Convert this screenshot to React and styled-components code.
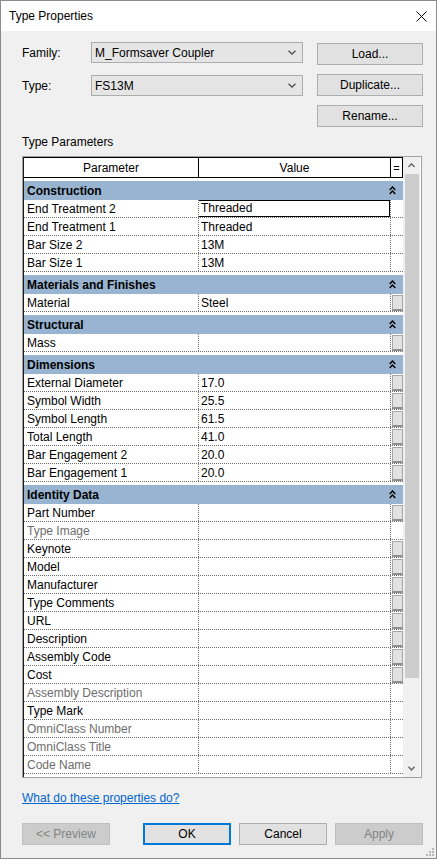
import React from "react"
import styled, { createGlobalStyle, css } from "styled-components"

const GlobalStyle = createGlobalStyle`
  html, body {
    margin: 0;
    padding: 0;
    background: #ffffff;
  }
  body {
    font-family: "Segoe UI", "Liberation Sans", Arial, sans-serif;
    font-size: 12px;
    color: #000;
  }
`

const groups = [
  {
    name: "Construction",
    rows: [
      { label: "End Treatment 2", value: "Threaded", focus: true },
      { label: "End Treatment 1", value: "Threaded" },
      { label: "Bar Size 2", value: "13M" },
      { label: "Bar Size 1", value: "13M" },
    ],
  },
  {
    name: "Materials and Finishes",
    rows: [{ label: "Material", value: "Steel", btn: true }],
  },
  {
    name: "Structural",
    rows: [{ label: "Mass", value: "", btn: true }],
  },
  {
    name: "Dimensions",
    rows: [
      { label: "External Diameter", value: "17.0", btn: true },
      { label: "Symbol Width", value: "25.5", btn: true },
      { label: "Symbol Length", value: "61.5", btn: true },
      { label: "Total Length", value: "41.0", btn: true },
      { label: "Bar Engagement 2", value: "20.0", btn: true },
      { label: "Bar Engagement 1", value: "20.0", btn: true },
    ],
  },
  {
    name: "Identity Data",
    rows: [
      { label: "Part Number", btn: true },
      { label: "Type Image", dim: true },
      { label: "Keynote", btn: true },
      { label: "Model", btn: true },
      { label: "Manufacturer", btn: true },
      { label: "Type Comments", btn: true },
      { label: "URL", btn: true },
      { label: "Description", btn: true },
      { label: "Assembly Code", btn: true },
      { label: "Cost", btn: true },
      { label: "Assembly Description", dim: true },
      { label: "Type Mark" },
      { label: "OmniClass Number", dim: true },
      { label: "OmniClass Title", dim: true },
      { label: "Code Name", dim: true },
    ],
  },
]

// window chrome
const Window = styled.div`
  width: 437px;
  height: 859px;
  box-sizing: border-box;
  border: 1px solid #8c8c8c;
  background: #f0f0f0;
  display: flex;
  flex-direction: column;
  position: relative;
`

const TitleBar = styled.div`
  height: 30px;
  background: #ffffff;
  display: flex;
  align-items: center;
  justify-content: space-between;
  padding-left: 8px;
`

const Title = styled.span`
  font-size: 12px;
`

const CloseButton = styled.div`
  width: 30px;
  height: 30px;
  display: flex;
  align-items: center;
  justify-content: center;
`

const Body = styled.div`
  flex: 1;
  padding: 11px 13px 0 21px;
  display: flex;
  flex-direction: column;
`

// top fields
const TopSection = styled.div`
  display: flex;
`

const Fields = styled.div`
  display: flex;
  flex-direction: column;
  gap: 12px;
`

const FieldRow = styled.div`
  display: flex;
  align-items: center;
`

const FieldLabel = styled.span`
  width: 69px;
`

const Select = styled.div`
  width: 212px;
  height: 21px;
  box-sizing: border-box;
  border: 1px solid #adadad;
  background: #e5e5e5;
  display: flex;
  align-items: center;
  justify-content: space-between;
  padding: 0 6px 0 3px;
`

const SideButtons = styled.div`
  margin-left: 14px;
  padding-top: 1px;
  display: flex;
  flex-direction: column;
  gap: 9px;
`

const Button = styled.div`
  width: ${(p) => p.$w || 106}px;
  height: 22px;
  box-sizing: border-box;
  border: 1px solid #adadad;
  background: #e1e1e1;
  display: flex;
  align-items: center;
  justify-content: center;
  ${(p) =>
    p.$default &&
    css`
      border: 2px solid #0078d7;
    `}
  ${(p) =>
    p.$disabled &&
    css`
      background: #cccccc;
      border-color: #bfbfbf;
      color: #838383;
    `}
`

const SectionLabel = styled.div`
  margin-top: 7px;
  line-height: 16px;
`

// property grid
const Grid = styled.div`
  margin-top: 6px;
  width: 400px;
  height: 622px;
  box-sizing: border-box;
  border: 1px solid #a0a0a0;
  background: #ffffff;
  display: flex;
`

const Table = styled.div`
  width: 380px;
  box-sizing: border-box;
  border-left: 1px solid #1e1e1e;
  overflow: hidden;
`

const cols = css`
  display: grid;
  grid-template-columns: 175px 192px 12px;
`

const HeaderRow = styled.div`
  ${cols};
  height: 21px;
  box-sizing: border-box;
  border-top: 1px solid #000;
  border-bottom: 1px solid #000;
`

const HeaderCell = styled.div`
  border-right: 1px solid #000;
  display: flex;
  align-items: center;
  justify-content: center;
  font-size: ${(p) => (p.$small ? 11 : 12)}px;
`

const GroupHeader = styled.div`
  margin-top: 3px;
  height: 19px;
  background: #99b4d1;
  display: flex;
  align-items: center;
  justify-content: space-between;
  padding-left: 3px;
  padding-right: 7px;
  font-weight: bold;
`

const Row = styled.div`
  ${cols};
  height: 18px;
  box-sizing: border-box;
  border-bottom: 1px dotted #6e6e6e;
`

const Cell = styled.div`
  display: flex;
  align-items: center;
  padding-left: ${(p) => p.$pad ?? 3}px;
  border-right: ${(p) => (p.$last ? "none" : "1px dotted #6e6e6e")};
  color: ${(p) => (p.$dim ? "#6d6d6d" : "#000")};
  white-space: nowrap;
  overflow: hidden;
`

const Editor = styled.div`
  flex: 1;
  height: 17px;
  box-sizing: border-box;
  border: 1px solid #000;
  margin-left: -1px;
  margin-top: -1px;
  padding-left: 2px;
  display: flex;
  align-items: center;
`

const ParamButton = styled.div`
  width: 9px;
  height: 13px;
  margin: 0 auto;
  background: #e1e1e1;
  border: 1px solid #a7a7a7;
  border-bottom: 2px solid #8e8e8e;
`

const Scrollbar = styled.div`
  width: 17px;
  background: #f0f0f0;
  display: flex;
  flex-direction: column;
`

const ScrollArrow = styled.div`
  height: 17px;
  display: flex;
  align-items: center;
  justify-content: center;
`

const Track = styled.div`
  flex: 1;
  padding: 0 1px 0 2px;
`

const Thumb = styled.div`
  height: 504px;
  background: #cdcdcd;
`

const Link = styled.a`
  margin-top: 12px;
  line-height: 16px;
  color: #0066cc;
  text-decoration: underline;
  align-self: flex-start;
`

const Footer = styled.div`
  margin-top: 17px;
  display: flex;
  gap: 8px;
`

const Spacer = styled.div`
  flex: 1;
`

const Grip = styled.div`
  position: absolute;
  right: 2px;
  bottom: 2px;
  display: flex;
`

const Chevron = ({ up, color = "#606060", w = 7, h = 4 }) => (
  <svg width={w} height={h + 1} viewBox={`0 0 ${w} ${h + 1}`}>
    <polyline
      points={up ? `0.5,${h} ${w / 2},0.8 ${w - 0.5},${h}` : `0.5,0.8 ${w / 2},${h} ${w - 0.5},0.8`}
      fill="none"
      stroke={color}
      strokeWidth="1.3"
    />
  </svg>
)

const Collapse = () => (
  <svg width="7" height="9" viewBox="0 0 7 9">
    <polyline points="0.7,4 3.5,1 6.3,4" fill="none" stroke="#000" strokeWidth="1.4" />
    <polyline points="0.7,8 3.5,5 6.3,8" fill="none" stroke="#000" strokeWidth="1.4" />
  </svg>
)

export default function App() {
  return (
    <>
      <GlobalStyle />
      <Window>
        <TitleBar>
          <Title>Type Properties</Title>
          <CloseButton>
            <svg width="11" height="11" viewBox="0 0 11 11">
              <path d="M0.5 0.5 L10.5 10.5 M10.5 0.5 L0.5 10.5" stroke="#000" strokeWidth="1" />
            </svg>
          </CloseButton>
        </TitleBar>
        <Body>
          <TopSection>
            <Fields>
              <FieldRow>
                <FieldLabel>Family:</FieldLabel>
                <Select>
                  <span>M_Formsaver Coupler</span>
                  <Chevron color="#505050" w={8} h={4} />
                </Select>
              </FieldRow>
              <FieldRow>
                <FieldLabel>Type:</FieldLabel>
                <Select>
                  <span>FS13M</span>
                  <Chevron color="#505050" w={8} h={4} />
                </Select>
              </FieldRow>
            </Fields>
            <SideButtons>
              <Button>Load...</Button>
              <Button>Duplicate...</Button>
              <Button>Rename...</Button>
            </SideButtons>
          </TopSection>

          <SectionLabel>Type Parameters</SectionLabel>

          <Grid>
            <Table>
              <HeaderRow>
                <HeaderCell>Parameter</HeaderCell>
                <HeaderCell>Value</HeaderCell>
                <HeaderCell $small>=</HeaderCell>
              </HeaderRow>
              {groups.map((g) => (
                <React.Fragment key={g.name}>
                  <GroupHeader>
                    <span>{g.name}</span>
                    <Collapse />
                  </GroupHeader>
                  {g.rows.map((r) => (
                    <Row key={r.label}>
                      <Cell $dim={r.dim}>{r.label}</Cell>
                      <Cell $pad={r.focus ? 0 : 2}>
                        {r.focus ? <Editor>{r.value}</Editor> : r.value}
                      </Cell>
                      <Cell $last $pad={0}>
                        {r.btn && <ParamButton />}
                      </Cell>
                    </Row>
                  ))}
                </React.Fragment>
              ))}
            </Table>
            <Scrollbar>
              <ScrollArrow>
                <Chevron up />
              </ScrollArrow>
              <Track>
                <Thumb />
              </Track>
              <ScrollArrow>
                <Chevron />
              </ScrollArrow>
            </Scrollbar>
          </Grid>

          <Link>What do these properties do?</Link>

          <Footer>
            <Button $w={88} $disabled>&lt;&lt; Preview</Button>
            <Spacer />
            <Button $w={88} $default>OK</Button>
            <Button $w={88}>Cancel</Button>
            <Button $w={88} $disabled>Apply</Button>
          </Footer>
        </Body>
        <Grip>
          <svg width="9" height="9" viewBox="0 0 9 9" fill="#b8b8b8">
            <rect x="7" y="1" width="2" height="2" />
            <rect x="4" y="4" width="2" height="2" />
            <rect x="7" y="4" width="2" height="2" />
            <rect x="1" y="7" width="2" height="2" />
            <rect x="4" y="7" width="2" height="2" />
            <rect x="7" y="7" width="2" height="2" />
          </svg>
        </Grip>
      </Window>
    </>
  )
}
